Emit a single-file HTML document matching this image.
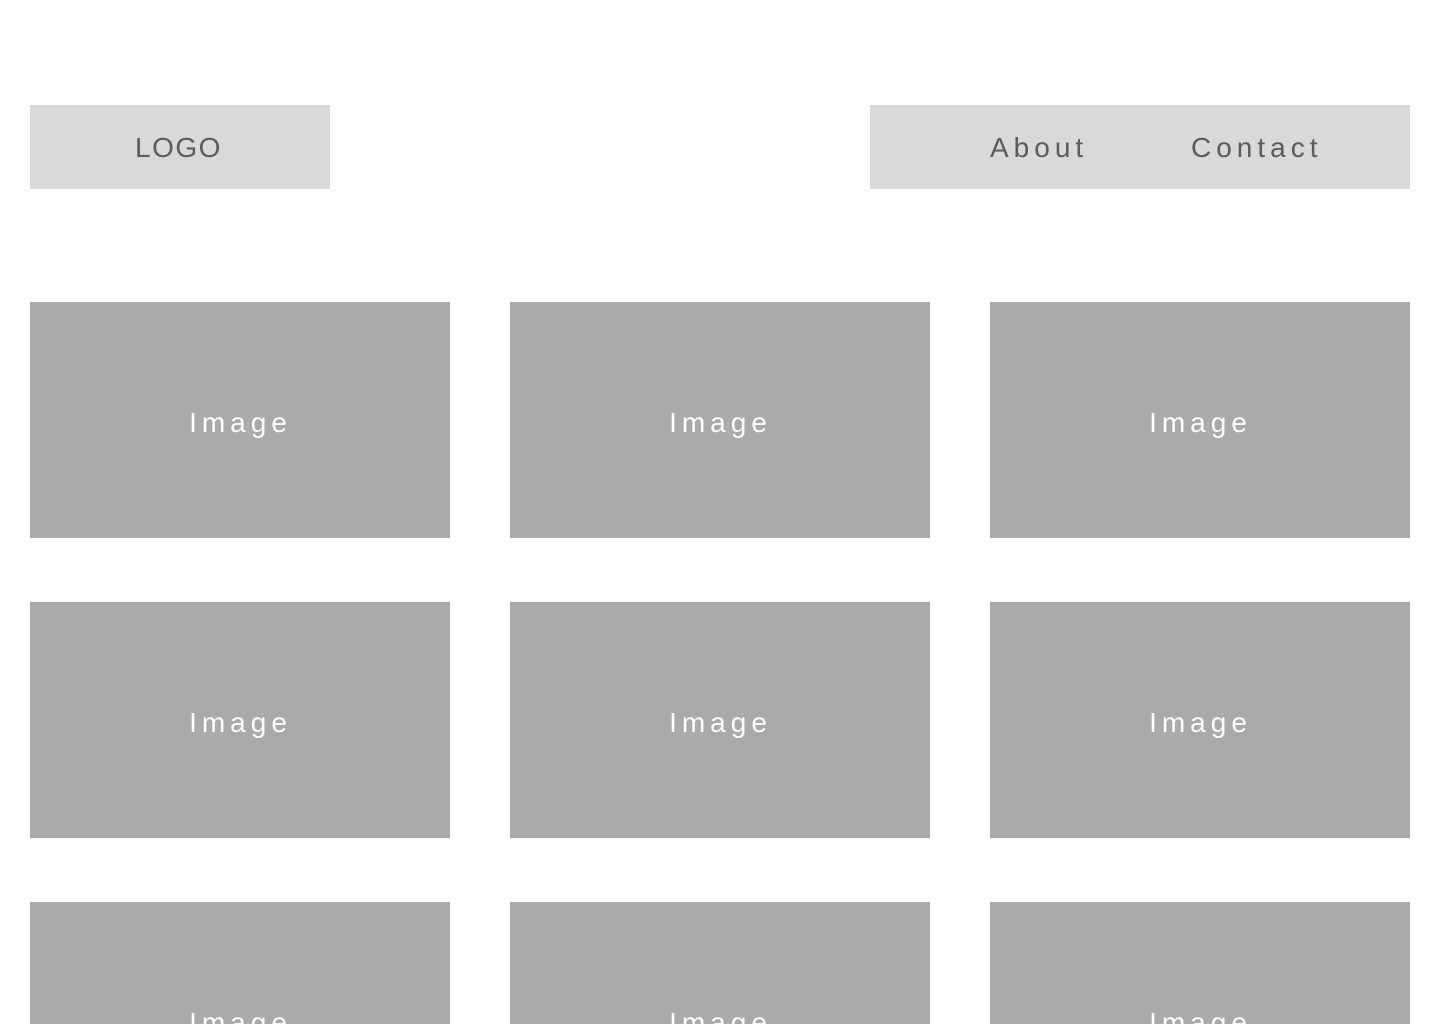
<!DOCTYPE html>
<html><head><meta charset="utf-8"><style>
html,body{margin:0;padding:0;background:#fff;width:1440px;height:1024px;overflow:hidden;position:relative;font-family:"Liberation Sans",sans-serif;}
.b{position:absolute;}
.hd{background:#d9d9d9;top:105px;height:84px;}
.t{position:absolute;font-size:28px;line-height:28px;letter-spacing:5px;color:#5b5b5b;white-space:nowrap;}
.img{position:absolute;background:#aaaaaa;width:420px;height:236px;overflow:hidden;}
.img span{position:absolute;left:0;right:0;top:107px;text-align:center;color:#fff;font-size:28px;line-height:28px;letter-spacing:5px;padding-left:1px;}
</style></head><body>
<div class="b hd" style="left:30px;width:300px"></div>
<div class="b hd" style="left:870px;width:540px"></div>
<div class="t" style="left:135px;top:134px;letter-spacing:1.5px">LOGO</div>
<div class="t" style="left:990px;top:134px">About</div>
<div class="t" style="left:1191px;top:134px">Contact</div>

<div class="img" style="left:30px;top:302px"><span>Image</span></div>
<div class="img" style="left:510px;top:302px"><span>Image</span></div>
<div class="img" style="left:990px;top:302px"><span>Image</span></div>
<div class="img" style="left:30px;top:602px"><span>Image</span></div>
<div class="img" style="left:510px;top:602px"><span>Image</span></div>
<div class="img" style="left:990px;top:602px"><span>Image</span></div>
<div class="img" style="left:30px;top:902px;height:122px"><span>Image</span></div>
<div class="img" style="left:510px;top:902px;height:122px"><span>Image</span></div>
<div class="img" style="left:990px;top:902px;height:122px"><span>Image</span></div>
</body></html>
